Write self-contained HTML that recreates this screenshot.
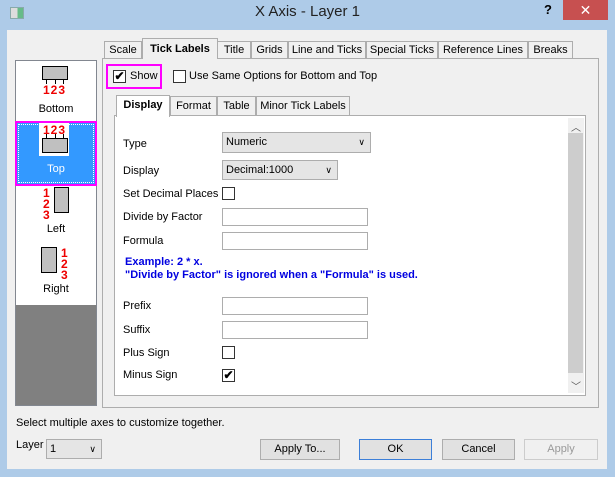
<!DOCTYPE html>
<html><head><style>
*{box-sizing:border-box;margin:0;padding:0}
body{width:615px;height:477px;background:#aecbe8;font-family:"Liberation Sans",sans-serif;font-size:11px;color:#000;position:relative;overflow:hidden}
.a{position:absolute}
.tab{position:absolute;top:41px;height:18px;border:1px solid #adadad;border-bottom:none;background:#f0f0f0;text-align:center;line-height:16px;font-size:11px}
.itab{position:absolute;top:96px;height:20px;border:1px solid #adadad;border-bottom:none;background:#f0f0f0;text-align:center;line-height:19px}
.lbl{position:absolute;left:123px;font-size:11px;line-height:14px}
.inp{position:absolute;left:222px;width:146px;height:18px;border:1px solid #adadad;background:#fff}
.cb{position:absolute;width:13px;height:13px;border:1px solid #333;background:#fff}
.combo{position:absolute;border:1px solid #adadad;background:#e5e5e5;padding-left:3px;line-height:19px}
.btn{position:absolute;top:439px;height:21px;border:1px solid #adadad;background:#e1e1e1;text-align:center;line-height:19px}
.chk{font-size:12px;font-weight:bold;line-height:11px;text-align:center}
.icon{position:absolute;background:#c0c0c0;border:1px solid #000}
.num{position:absolute;color:#e00;font-weight:bold;font-size:12px;font-family:"Liberation Sans",sans-serif;line-height:10px;letter-spacing:1px}
</style></head><body>
<div class="a" style="left:10px;top:7px;width:14px;height:12px;border:1px solid #8aa;background:linear-gradient(90deg,#ddd 55%,#6b8 55%)"></div>
<div class="a" style="left:0;top:3px;width:615px;text-align:center;font-size:15px;color:#222">X Axis - Layer 1</div>
<div class="a" style="left:544px;top:2px;font-weight:bold;font-size:13px">?</div>
<div class="a" style="left:563px;top:0;width:45px;height:20px;background:#c75050;color:#fff;text-align:center;font-size:14px;line-height:20px">✕</div>
<div class="a" style="left:7px;top:30px;width:600px;height:439px;background:#f0f0f0"></div>

<div class="tab" style="left:104px;width:38px">Scale</div>
<div class="tab" style="left:251px;width:37px">Grids</div>
<div class="tab" style="left:217px;width:34px">Title</div>
<div class="tab" style="left:288px;width:78px">Line and Ticks</div>
<div class="tab" style="left:366px;width:72px">Special Ticks</div>
<div class="tab" style="left:438px;width:90px">Reference Lines</div>
<div class="tab" style="left:528px;width:45px">Breaks</div>
<div class="a" style="left:102px;top:58px;width:497px;height:350px;border:1px solid #adadad;background:#f0f0f0"></div>
<div class="tab" style="left:142px;width:76px;top:38px;height:21px;font-weight:bold;line-height:20px;background:#f0f0f0;z-index:2">Tick Labels</div>

<div class="a" style="left:15px;top:60px;width:82px;height:346px;border:1px solid #828790;background:#fff"></div>
<div class="a" style="left:16px;top:305px;width:80px;height:100px;background:#808080"></div>
<div class="icon" style="left:42px;top:66px;width:26px;height:14px"></div>
<div class="a" style="left:46px;top:80px;width:18px;height:4px;border-left:1px solid #000;border-right:1px solid #000"><div style="margin-left:8px;width:1px;height:4px;background:#000"></div></div>
<div class="num" style="left:43px;top:85px">123</div>
<div class="a" style="left:16px;top:103px;width:80px;text-align:center">Bottom</div>
<div class="a" style="left:15px;top:121px;width:82px;height:65px;background:#3399ff;border:2px solid #ff00ff"><div style="position:absolute;inset:1px;border:1px dotted #fff"></div></div>
<div class="a" style="left:39px;top:123px;width:30px;height:33px;background:#fff"></div>
<div class="num" style="left:43px;top:125px">123</div>
<div class="a" style="left:46px;top:134px;width:18px;height:4px;border-left:1px solid #000;border-right:1px solid #000"><div style="margin-left:8px;width:1px;height:4px;background:#000"></div></div>
<div class="icon" style="left:42px;top:138px;width:26px;height:15px"></div>
<div class="a" style="left:16px;top:163px;width:80px;text-align:center;color:#fff">Top</div>
<div class="num" style="left:43px;top:188px;line-height:11px">1<br>2<br>3</div>
<div class="icon" style="left:54px;top:187px;width:15px;height:26px"></div>
<div class="a" style="left:16px;top:223px;width:80px;text-align:center">Left</div>
<div class="icon" style="left:41px;top:247px;width:16px;height:26px"></div>
<div class="num" style="left:61px;top:248px;line-height:11px">1<br>2<br>3</div>
<div class="a" style="left:16px;top:283px;width:80px;text-align:center">Right</div>

<div class="a" style="left:106px;top:64px;width:56px;height:25px;border:2px solid #ff00ff"></div>
<div class="cb chk" style="left:113px;top:70px">✔</div>
<div class="a" style="left:130px;top:70px">Show</div>
<div class="cb" style="left:173px;top:70px"></div>
<div class="a" style="left:189px;top:70px">Use Same Options for Bottom and Top</div>

<div class="itab" style="left:170px;width:47px">Format</div>
<div class="itab" style="left:217px;width:39px">Table</div>
<div class="itab" style="left:256px;width:94px">Minor Tick Labels</div>
<div class="a" style="left:114px;top:115px;width:472px;height:281px;border:1px solid #adadad;background:#fff"></div>
<div class="itab" style="left:116px;width:54px;top:95px;height:22px;font-weight:bold;background:#fff;border-color:#adadad;z-index:2">Display</div>
<div class="a" style="left:568px;top:118px;width:16px;height:275px;background:#f0f0f0"></div>
<div class="a" style="left:568px;top:133px;width:15px;height:240px;background:#cdcdcd"></div>
<div class="a" style="left:571px;top:119px;font-size:10px;color:#555">︿</div>
<div class="a" style="left:571px;top:378px;font-size:10px;color:#555">﹀</div>

<div class="lbl" style="top:137px">Type</div>
<div class="combo" style="left:222px;top:132px;width:149px;height:21px">Numeric<span style="position:absolute;right:5px;font-size:9px">∨</span></div>
<div class="lbl" style="top:164px">Display</div>
<div class="combo" style="left:222px;top:160px;width:116px;height:20px;line-height:18px">Decimal:1000<span style="position:absolute;right:5px;font-size:9px">∨</span></div>
<div class="lbl" style="top:187px">Set Decimal Places</div>
<div class="cb" style="left:222px;top:187px"></div>
<div class="lbl" style="top:210px">Divide by Factor</div>
<div class="inp" style="top:208px"></div>
<div class="lbl" style="top:234px">Formula</div>
<div class="inp" style="top:232px"></div>
<div class="a" style="left:125px;top:256px;color:#0000e0;font-weight:bold;font-size:11px;line-height:13px">Example: 2 * x.<br>"Divide by Factor" is ignored when a "Formula" is used.</div>
<div class="lbl" style="top:299px">Prefix</div>
<div class="inp" style="top:297px"></div>
<div class="lbl" style="top:323px">Suffix</div>
<div class="inp" style="top:321px"></div>
<div class="lbl" style="top:346px">Plus Sign</div>
<div class="cb" style="left:222px;top:346px"></div>
<div class="lbl" style="top:368px">Minus Sign</div>
<div class="cb chk" style="left:222px;top:369px">✔</div>

<div class="a" style="left:16px;top:417px">Select multiple axes to customize together.</div>
<div class="a" style="left:16px;top:439px">Layer</div>
<div class="combo" style="left:46px;top:439px;width:56px;height:20px;background:#e5e5e5">1<span style="position:absolute;right:5px;font-size:9px">∨</span></div>
<div class="btn" style="left:260px;width:80px">Apply To...</div>
<div class="btn" style="left:359px;width:73px;border-color:#3c7fd8">OK</div>
<div class="btn" style="left:442px;width:73px">Cancel</div>
<div class="btn" style="left:524px;width:74px;color:#999;background:#f0f0f0;border-color:#ccc">Apply</div>
</body></html>
